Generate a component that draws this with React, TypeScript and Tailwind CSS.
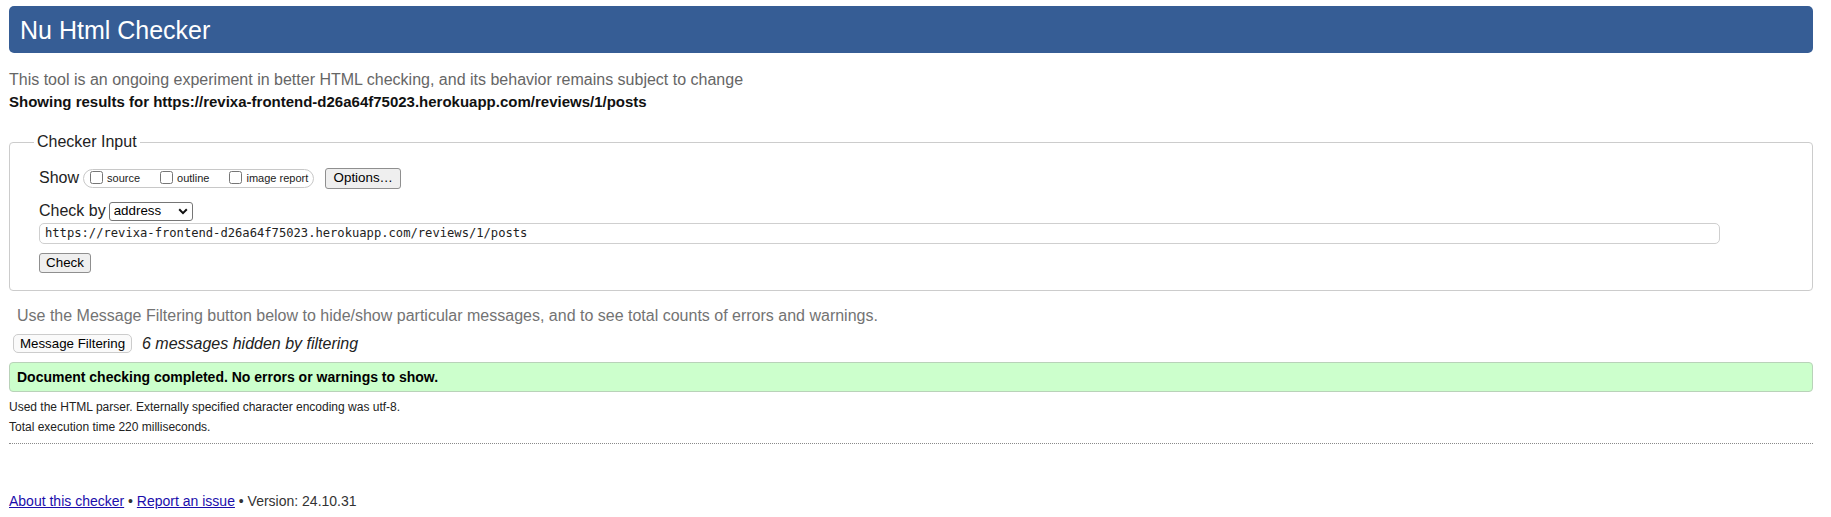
import React from "react";

const pageUrl = "https://revixa-frontend-d26a64f75023.herokuapp.com/reviews/1/posts";

function ShowOption({ label, last }: { label: string; last?: boolean }) {
  return (
    <label className={`flex items-center ${last ? "" : "mr-[20px]"}`}>
      <input type="checkbox" className="w-[13px] h-[13px] m-0 mt-[-2px]" />
      <span className="ml-[4px] text-[11px] leading-[14px]">{label}</span>
    </label>
  );
}

export default function App() {
  return (
    <div className="w-[1831px] h-[517px] bg-white pl-[9px] pr-[18px] pt-[6px] text-[#222] font-['Liberation_Sans',Arial,sans-serif]">
      {/* title bar */}
      <h1 className="h-[47px] rounded-[5px] bg-[#365d95] flex items-center pl-[11px] text-white text-[25px] leading-[30px] font-normal">
        Nu Html Checker
      </h1>

      <p className="mt-[17px] text-[16px] leading-[20px] text-[#666]">
        This tool is an ongoing experiment in better HTML checking, and its behavior remains subject to change
      </p>
      <p className="mt-[2px] text-[15px] leading-[20px] font-bold text-[#111]">
        Showing results for {pageUrl}
      </p>

      {/* checker input */}
      <fieldset className="mt-[21px] border border-[#cccccc] rounded-[4px] pl-[29px] pt-[16px] pb-[17px]">
        <legend className="ml-[-5px] px-[3px] text-[16px] leading-[18px]">Checker Input</legend>

        <div className="flex items-center h-[22px]">
          <span className="text-[16px] mr-[4px]">Show</span>
          <div className="flex items-center h-[19px] border border-[#c8c8c8] rounded-full pl-[6px] pr-[5px]">
            <ShowOption label="source" />
            <ShowOption label="outline" />
            <ShowOption label="image report" last />
          </div>
          <button className="ml-[11px] h-[21px] w-[76px] bg-[#efefef] border border-[#8f8f8f] rounded-[3px] text-[13.33px] leading-[16px] text-black">
            Options…
          </button>
        </div>

        <div className="flex items-center h-[20px] mt-[12px]">
          <span className="text-[16px] mr-[3px]">Check by</span>
          <div className="flex items-center justify-between w-[84px] h-[19px] border border-[#767676] rounded-[3px] pl-[4px] pr-[4px] text-[13.33px] text-black">
            <span>address</span>
            <svg width="10" height="7" viewBox="0 0 10 7" fill="none">
              <path d="M1.2 1.3 5 5.1 8.8 1.3" stroke="#111" strokeWidth="2" />
            </svg>
          </div>
        </div>

        <div className="mt-[2px] w-[1681px] h-[21px] border border-[#cfcfcf] rounded-[5px] flex items-center pl-[5px] font-['DejaVu_Sans_Mono',monospace] text-[12.15px] text-[#222]">
          {pageUrl}
        </div>

        <button className="mt-[9px] block h-[20px] w-[52px] bg-[#efefef] border border-[#8f8f8f] rounded-[3px] text-[13.33px] leading-[16px] text-black">
          Check
        </button>
      </fieldset>

      <p className="mt-[15px] pl-[8px] text-[16px] leading-[20px] text-[#737373]">
        Use the Message Filtering button below to hide/show particular messages, and to see total counts of errors and warnings.
      </p>

      <div className="mt-[8px] pl-[4px] flex items-center h-[19px]">
        <button className="h-[19px] w-[119px] bg-[#fafafa] border border-[#cccccc] rounded-[5px] text-[13.33px] leading-[16px] text-black">
          Message Filtering
        </button>
        <span className="ml-[10px] text-[16px] italic text-[#222]">6 messages hidden by filtering</span>
      </div>

      <div className="mt-[9px] h-[30px] bg-[#ccffcc] border border-[#b9d2b9] rounded-[4px] flex items-center pl-[7px] text-[14px] font-bold text-black">
        Document checking completed. No errors or warnings to show.
      </div>

      <p className="mt-[5px] text-[12px] leading-[20px] text-[#222]">
        Used the HTML parser. Externally specified character encoding was utf-8.
      </p>
      <p className="text-[12px] leading-[20px] text-[#222]">Total execution time 220 milliseconds.</p>

      <div className="mt-[6px] border-t border-dotted border-[#8a8a8a]" />

      <p className="mt-[47px] text-[14px] leading-[20px] text-[#333]">
        <a href="#" className="text-[#1a0dab] underline">About this checker</a>
        {" • "}
        <a href="#" className="text-[#1a0dab] underline">Report an issue</a>
        {" • Version: 24.10.31"}
      </p>
    </div>
  );
}
